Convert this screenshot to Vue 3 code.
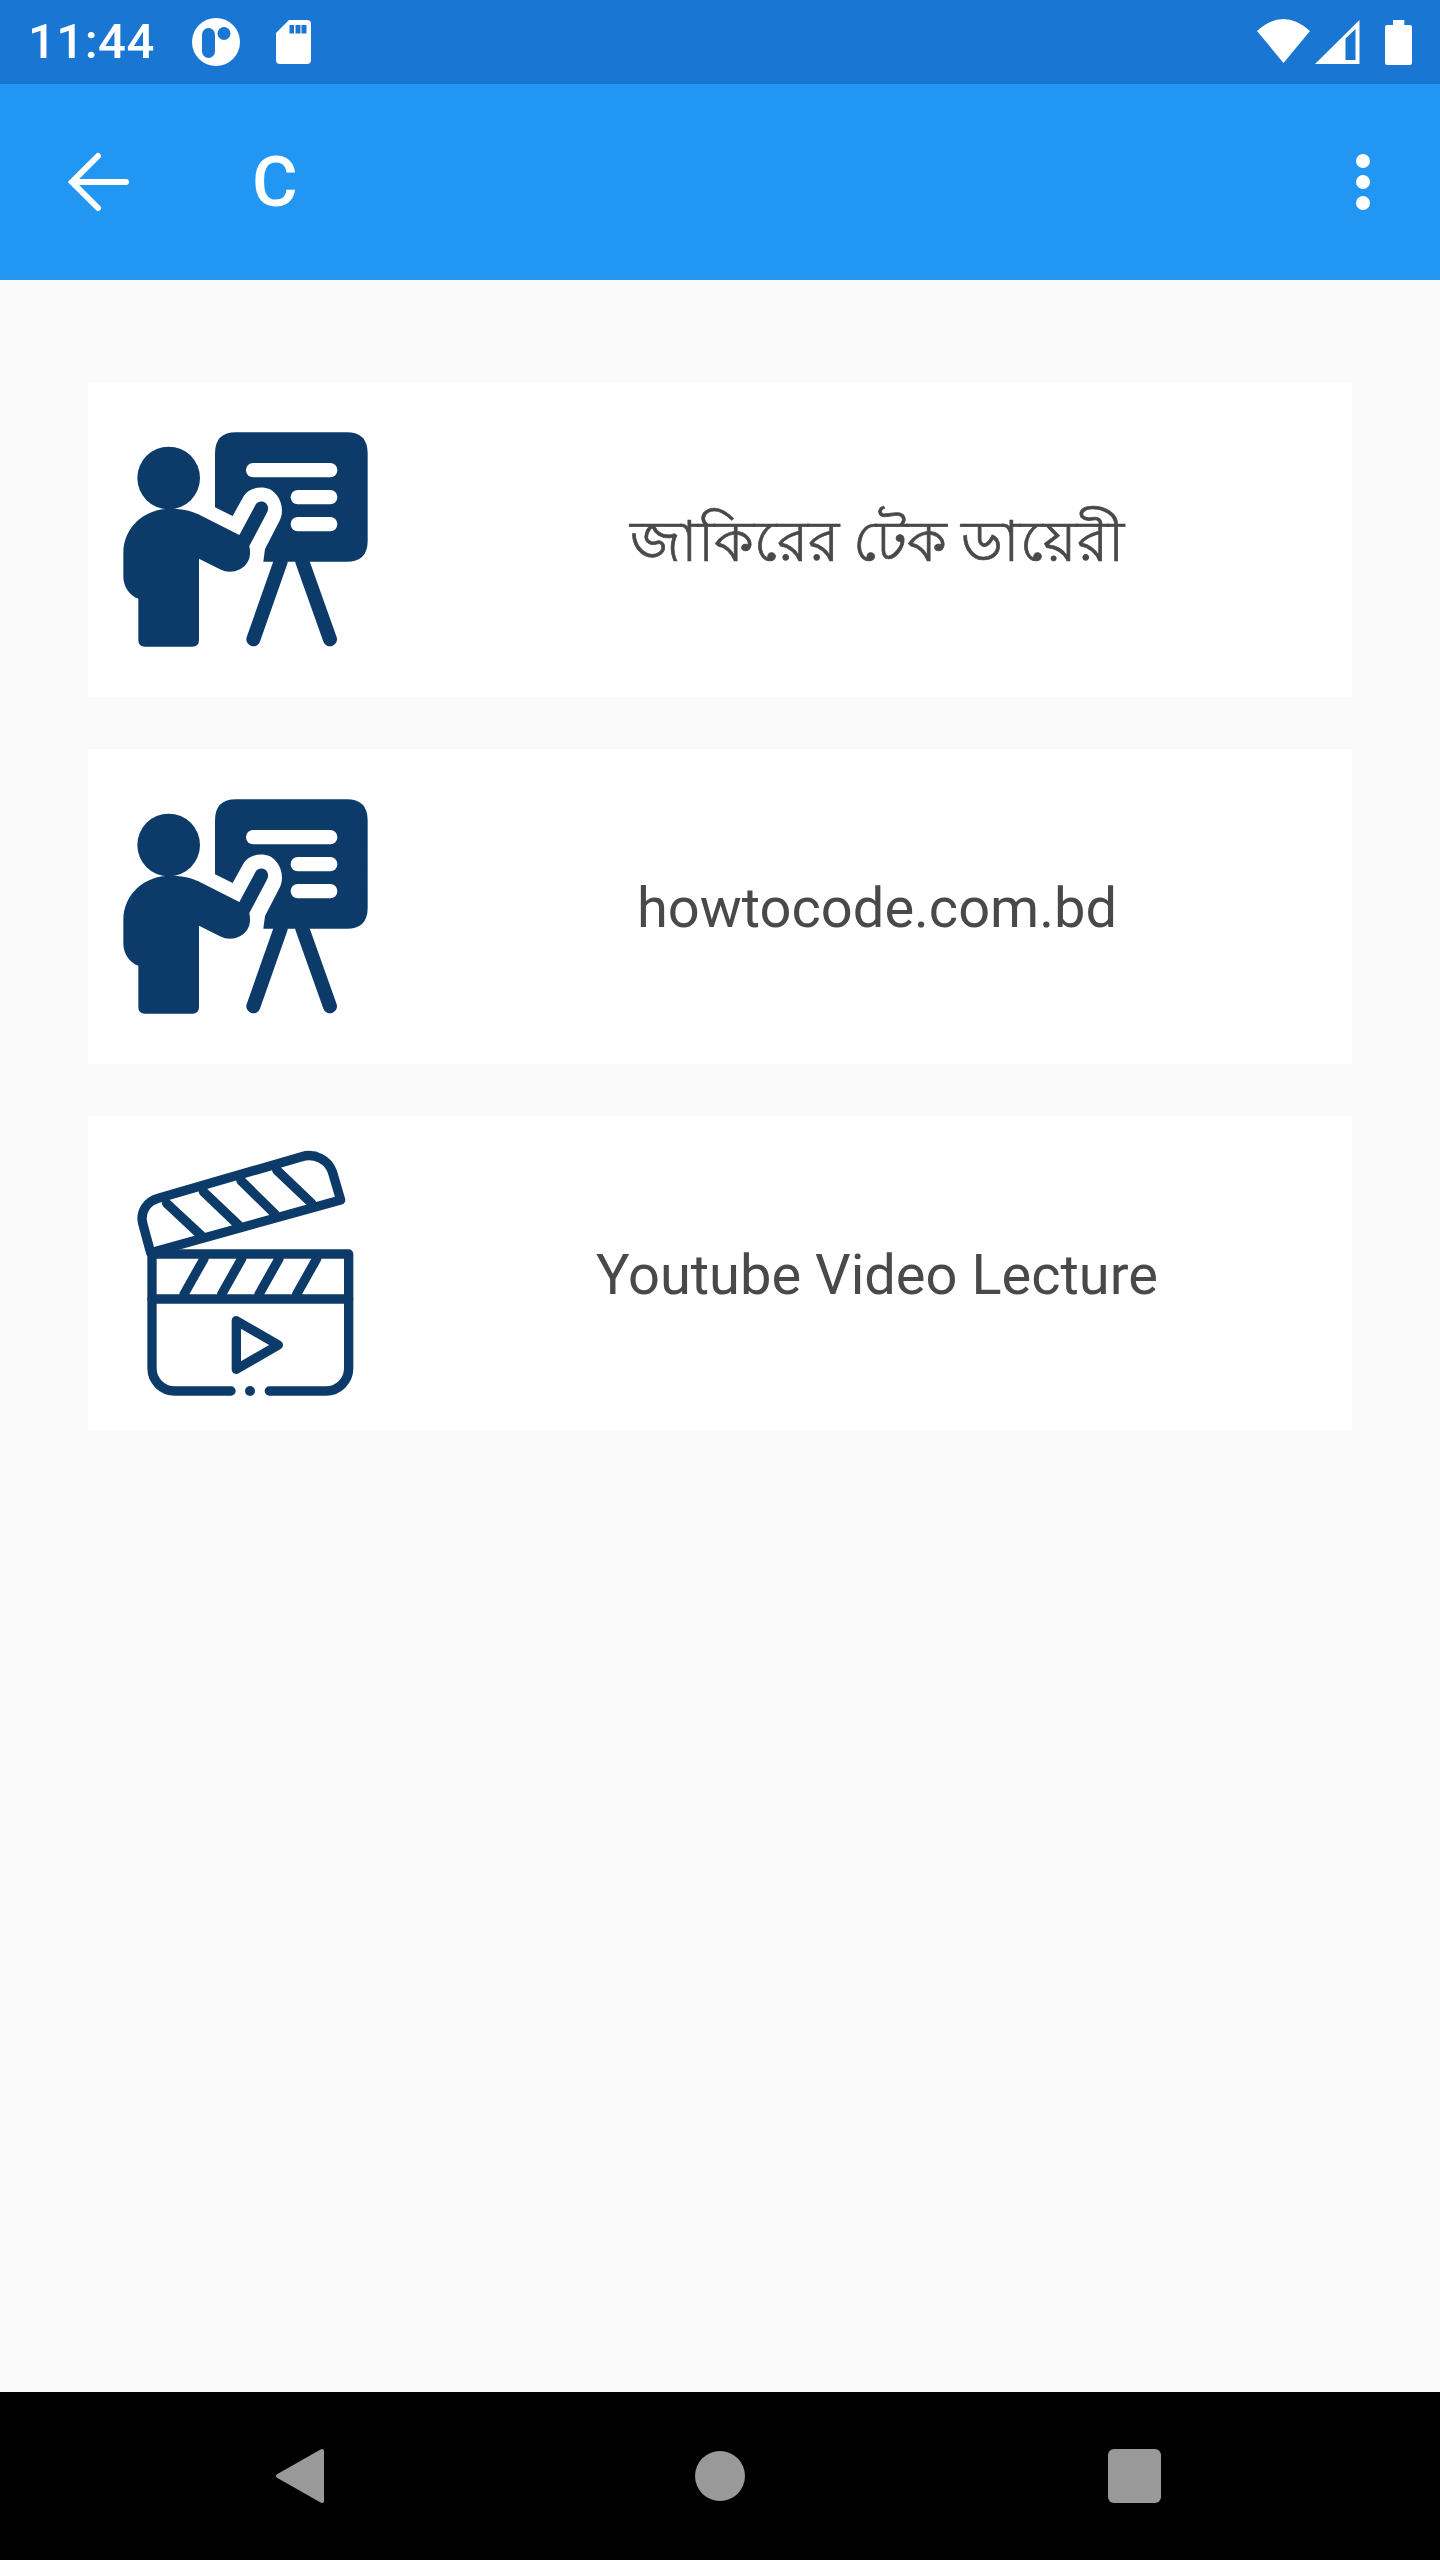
<template>
  <div class="phone">
    <!-- status bar -->
    <div class="status">
      <span class="time">11:44</span>
      <svg class="st-round" width="48" height="48" viewBox="0 0 48 48">
        <circle cx="24" cy="24" r="24" fill="#fff" />
        <rect x="10" y="10" width="13" height="30" rx="6.5" fill="#1976d2" />
        <circle cx="32" cy="15.5" r="6.5" fill="#1976d2" />
      </svg>
      <svg class="st-sd" width="36" height="44" viewBox="0 0 36 44">
        <path d="M0 13 13 0H31Q35 0 35 4V40Q35 44 31 44H4Q0 44 0 40Z" fill="#fff" />
        <path d="M13.500 5h4.500v8.500h-4.500zM19.500 5h5v8.500h-5zM25.500 5h5v8.500h-5z" fill="#1976d2" />
      </svg>
      <div class="status-right">
        <svg class="st-wifi" width="53" height="44" viewBox="0 0 53 44">
          <path d="M0 12Q26.500 -12 53 12L26.500 44Z" fill="#fff" />
        </svg>
        <svg class="st-signal" width="45" height="44" viewBox="0 0 45 44">
          <path d="M0 44 44.500 0V44Z" fill="#fff" />
          <path d="M30.500 18.500 40.500 9V40H30.500Z" fill="#1976d2" />
        </svg>
        <svg class="st-battery" width="27" height="45" viewBox="0 0 27 45">
          <path d="M8 0H19.300V5H25Q27 5 27 7V43Q27 45 25 45H2Q0 45 0 43V7Q0 5 2 5H8Z" fill="#fff" />
        </svg>
      </div>
    </div>

    <!-- toolbar -->
    <header class="toolbar">
      <svg class="back" width="70" height="66" viewBox="0 0 70 66">
        <path d="M66 33H12M38 7 12 33 38 59" fill="none" stroke="#fff" stroke-width="6" stroke-linecap="round" />
      </svg>
      <h1 class="title">C</h1>
      <svg class="more" width="14" height="56" viewBox="0 0 14 56">
        <circle cx="7" cy="7" r="7" fill="#fff" />
        <circle cx="7" cy="28" r="7" fill="#fff" />
        <circle cx="7" cy="49" r="7" fill="#fff" />
      </svg>
    </header>

    <!-- list -->
    <main class="content">
      <div v-for="item in items" :key="item.label" class="card">
        <svg v-if="item.icon === 'teacher'" class="card-icon" width="314" height="315" viewBox="24 36 942 945">
          <g fill="#0d3b69">
            <circle cx="266" cy="324" r="94" />
            <path d="M175 686C150 678 130 650 130 620V550C130 470 195 416 270 416 300 416 330 420 355 433L478 495 528 402C535 392 550 392 558 400 566 408 566 420 560 430L508 528C515 560 505 585 480 598 460 608 440 608 420 598L357 566V810Q357 830 337 830H195Q175 830 175 810Z" />
            <path d="M405 412V250Q405 187 468 187H800Q863 187 863 250V512Q863 575 800 575H550L555 537 600 450C615 415 600 375 570 358 540 345 505 355 490 380L458 438Z" />
          </g>
          <g fill="#fff">
            <rect x="498" y="279" width="274" height="43" rx="21" />
            <rect x="632" y="360" width="140" height="43" rx="21" />
            <rect x="632" y="441" width="140" height="43" rx="21" />
          </g>
          <path d="M602 575 520 808M667 575 750 808" fill="none" stroke="#0d3b69" stroke-width="42" stroke-linecap="round" />
        </svg>
        <svg v-else class="card-icon" width="314" height="315" viewBox="24 18 942 945">
          <g fill="none" stroke="#0d3b69" stroke-width="28" stroke-linecap="round" stroke-linejoin="round">
            <path d="M212 428 188 340C180 305 200 275 235 265L665 140C705 128 745 150 757 185L782 270Z" />
            <path d="M260 280 365 378M370 245 475 345M483 212 585 312M590 180 695 280" />
            <path d="M216 432H806V775A68 68 0 0 1 738 843H568M216 432V775A68 68 0 0 0 284 843H453" />
            <path d="M216 567H806M372 446 312 553M485 446 425 553M597 446 537 553M710 446 650 553" />
            <path d="M469 632 595 705 469 778Z" />
          </g>
          <circle cx="510" cy="843" r="15" fill="#0d3b69" />
        </svg>
        <span class="card-label" :class="{ bn: item.bn }">{{ item.label }}</span>
      </div>
    </main>

    <!-- android nav -->
    <footer class="navbar">
      <svg width="50" height="56" viewBox="0 0 50 56">
        <path d="M47 3 3 28 47 53Z" fill="#999" stroke="#999" stroke-width="4" stroke-linejoin="round" />
      </svg>
      <span class="nav-home"></span>
      <span class="nav-recent"></span>
    </footer>
  </div>
</template>

<script setup>
const items = [
  { label: 'জাকিরের টেক ডায়েরী', icon: 'teacher', bn: true },
  { label: 'howtocode.com.bd', icon: 'teacher' },
  { label: 'Youtube Video Lecture', icon: 'clapper' }
]
</script>

<style>
html,
body {
  margin: 0;
  background: #fafafa;
}
</style>

<style scoped>
.phone {
  width: 1440px;
  height: 2560px;
  display: flex;
  flex-direction: column;
  background: #fafafa;
  font-family: Roboto, "Noto Sans", sans-serif;
}

.status {
  height: 84px;
  background: #1976d2;
  display: flex;
  align-items: center;
  padding-left: 28px;
  padding-right: 28px;
  box-sizing: border-box;
}

.time {
  color: #fff;
  font-size: 49px;
  line-height: 84px;
  font-weight: 500;
  letter-spacing: 0.5px;
  width: 164px;
}

.st-sd {
  margin-left: 36px;
}

.status-right {
  margin-left: auto;
  display: flex;
  align-items: center;
}

.st-wifi {
  margin-bottom: 2px;
}

.st-signal {
  margin-left: 5px;
  margin-bottom: 1px;
}

.st-battery {
  margin-left: 25px;
}

.toolbar {
  height: 196px;
  background: #2196f3;
  display: flex;
  align-items: center;
  padding-left: 60px;
  padding-right: 70px;
  box-sizing: border-box;
}

.back {
  filter: blur(0.5px);
}

.title {
  margin: 0 0 0 122px;
  color: #fff;
  font-size: 70px;
  font-weight: 500;
  line-height: 1;
}

.more {
  margin-left: auto;
}

.content {
  flex: 1;
  padding: 102px 88px 0;
  display: flex;
  flex-direction: column;
  gap: 52px;
}

.card {
  height: 315px;
  background: #fff;
  display: flex;
  align-items: center;
}

.card-icon {
  flex: none;
}

.card-label {
  flex: 1;
  text-align: center;
  font-size: 56px;
  color: #494949;
  padding-top: 2px;
}

.card-label.bn {
  font-size: 56.5px;
  padding-top: 12px;
  -webkit-text-stroke: 0.7px #494949;
}

.navbar {
  height: 168px;
  background: #000;
  display: flex;
  align-items: center;
  padding-left: 275px;
}

.nav-home {
  width: 50px;
  height: 50px;
  border-radius: 50%;
  background: #999;
  margin-left: 370px;
}

.nav-recent {
  width: 53px;
  height: 54px;
  border-radius: 6px;
  background: #999;
  margin-left: 363px;
}
</style>
